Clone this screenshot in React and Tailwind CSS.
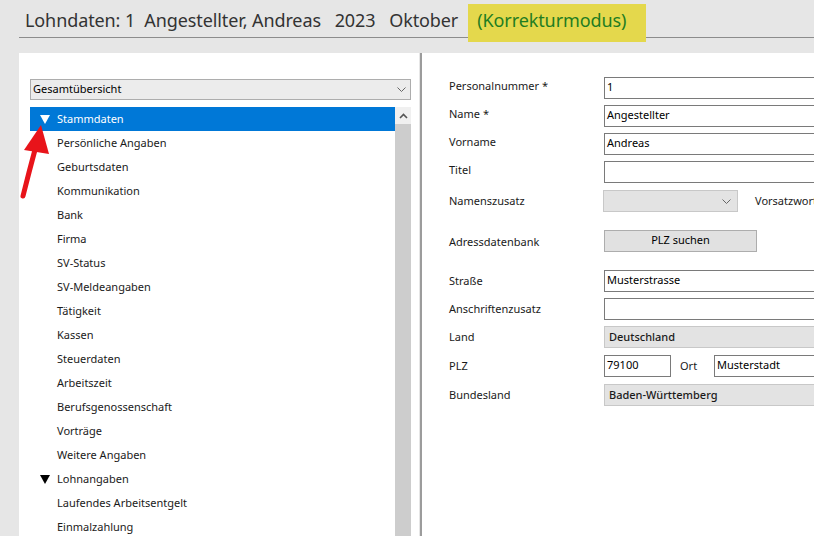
import React from 'react';

const treeItems = [
    { label: 'Stammdaten', head: true, selected: true },
    { label: 'Persönliche Angaben' },
    { label: 'Geburtsdaten' },
    { label: 'Kommunikation' },
    { label: 'Bank' },
    { label: 'Firma' },
    { label: 'SV-Status' },
    { label: 'SV-Meldeangaben' },
    { label: 'Tätigkeit' },
    { label: 'Kassen' },
    { label: 'Steuerdaten' },
    { label: 'Arbeitszeit' },
    { label: 'Berufsgenossenschaft' },
    { label: 'Vorträge' },
    { label: 'Weitere Angaben' },
    { label: 'Lohnangaben', head: true },
    { label: 'Laufendes Arbeitsentgelt' },
    { label: 'Einmalzahlung' },
];

const Triangle = ({ color }) => (
    <svg width="10" height="9" viewBox="0 0 10 9">
        <polygon points="0,0 10,0 5,9" fill={color} />
    </svg>
);

const ChevronDown = () => (
    <svg width="9" height="5" viewBox="0 0 9 5">
        <polyline points="0.5,0.5 4.5,4.5 8.5,0.5" fill="none" stroke="#666" strokeWidth="1" />
    </svg>
);

const Row = ({ label, className = '', labelClass = '', children }) => (
    <div className={`flex items-center h-[22px] ${className}`}>
        <div className={`w-[155px] shrink-0 text-[11px] text-[#1a1a1a] ${labelClass}`}>{label}</div>
        {children}
    </div>
);

const Input = ({ value = '', width = 'w-[260px]' }) => (
    <div className={`${width} shrink-0 h-[22px] border border-[#7a7a7a] bg-white px-[2px] text-[11px] text-black leading-[17px] whitespace-nowrap`}>
        {value}
    </div>
);

const GrayField = ({ value }) => (
    <div className="w-[260px] shrink-0 h-[22px] border border-[#c8c8c8] bg-[#e3e3e3] pl-[4px] text-[11px] font-medium text-[#1a1a1a] leading-[19px] whitespace-nowrap">
        {value}
    </div>
);

const App = () => {
    return (
        <div className="relative w-[814px] h-[536px] overflow-hidden bg-[#e6e6e6] font-['Noto_Sans','Open_Sans',sans-serif]">
            {/* header */}
            <div className="ml-[19px] h-[38px] border-b border-[#8c8c8c] flex pl-[6px] text-[18px] tracking-[-0.1px]">
                <span className="whitespace-pre leading-[40px] text-[#333333]">
                    Lohndaten: 1  Angestellter, Andreas   2023   Oktober
                </span>
                <span className="ml-[10px] mt-[4px] -mb-[5px] bg-[#e4d84c] pl-[9px] pr-[20px] leading-[32px] text-[#1f7d22] whitespace-nowrap">
                    (Korrekturmodus)
                </span>
            </div>

            <div className="flex mt-[15px] ml-[19px] h-[483px]">
                {/* left panel */}
                <div className="w-[400px] shrink-0 bg-white pt-[26px] pl-[11px]">
                    <div className="w-[381px] h-[21px] border border-[#adadad] bg-[#ececec] flex items-center justify-between pl-[2px] pr-[4px]">
                        <span className="text-[11px] text-black">Gesamtübersicht</span>
                        <ChevronDown />
                    </div>
                    <div className="flex mt-[7px] w-[381px]">
                        <div className="w-[365px]">
                            {treeItems.map((item) => (
                                <div
                                    key={item.label}
                                    className={`h-[24px] flex items-center text-[11px] ${item.selected ? 'bg-[#0078d7] text-white' : 'text-[#1a1a1a]'}`}
                                >
                                    <div className="w-[27px] pl-[10px] flex items-center">
                                        {item.head && <Triangle color={item.selected ? '#ffffff' : '#000000'} />}
                                    </div>
                                    <span>{item.label}</span>
                                </div>
                            ))}
                        </div>
                        <div className="w-[16px] flex flex-col">
                            <div className="h-[17px] bg-[#f0f0f0] flex items-center justify-center">
                                <svg width="9" height="6" viewBox="0 0 9 6">
                                    <polyline points="1,5 4.5,1.5 8,5" fill="none" stroke="#555" strokeWidth="1.6" />
                                </svg>
                            </div>
                            <div className="flex-1 bg-[#cdcdcd]" />
                        </div>
                    </div>
                </div>

                <div className="w-[1px] shrink-0" />
                <div className="w-[2px] shrink-0 bg-[#9c9c9c]" />

                {/* right panel */}
                <div className="flex-1 bg-white pt-[24px] pl-[27px]">
                    <Row label="Personalnummer *" labelClass="pb-[3px]">
                        <Input value="1" />
                    </Row>
                    <Row label="Name *" className="mt-[6px]" labelClass="pb-[3px]">
                        <Input value="Angestellter" />
                    </Row>
                    <Row label="Vorname" className="mt-[6px]" labelClass="pb-[3px]">
                        <Input value="Andreas" />
                    </Row>
                    <Row label="Titel" className="mt-[6px]" labelClass="pb-[3px]">
                        <Input />
                    </Row>
                    <Row label="Namenszusatz" className="mt-[7px]">
                        <div className="w-[135px] shrink-0 h-[22px] border border-[#c8c8c8] bg-[#e3e3e3] flex items-center justify-end pr-[6px] -ml-[1px]">
                            <ChevronDown />
                        </div>
                        <span className="ml-[17px] text-[11px] text-[#1a1a1a] whitespace-nowrap">Vorsatzwort</span>
                    </Row>
                    <Row label="Adressdatenbank" className="mt-[18px]" labelClass="pt-[3px]">
                        <div className="w-[153px] shrink-0 h-[22px] border border-[#adadad] bg-[#e1e1e1] flex items-center justify-center pb-[2px] text-[11px] text-black">
                            PLZ suchen
                        </div>
                    </Row>
                    <Row label="Straße" className="mt-[18px]">
                        <Input value="Musterstrasse" />
                    </Row>
                    <Row label="Anschriftenzusatz" className="mt-[6px]">
                        <Input />
                    </Row>
                    <Row label="Land" className="mt-[6px]">
                        <GrayField value="Deutschland" />
                    </Row>
                    <Row label="PLZ" className="mt-[7px]">
                        <Input value="79100" width="w-[67px]" />
                        <span className="ml-[9px] w-[34px] shrink-0 text-[11px] text-[#1a1a1a]">Ort</span>
                        <Input value="Musterstadt" width="w-[160px]" />
                    </Row>
                    <Row label="Bundesland" className="mt-[7px]">
                        <GrayField value="Baden-Württemberg" />
                    </Row>
                </div>
            </div>

            {/* red pointer arrow */}
            <svg className="absolute left-0 top-0 pointer-events-none" width="814" height="536" viewBox="0 0 814 536">
                <path d="M23,196 Q29,172 36,146" fill="none" stroke="#e8141a" strokeWidth="5" strokeLinecap="round" />
                <polygon points="41,125 24,150 49,154" fill="#e8141a" />
            </svg>
        </div>
    );
};

export default App;
